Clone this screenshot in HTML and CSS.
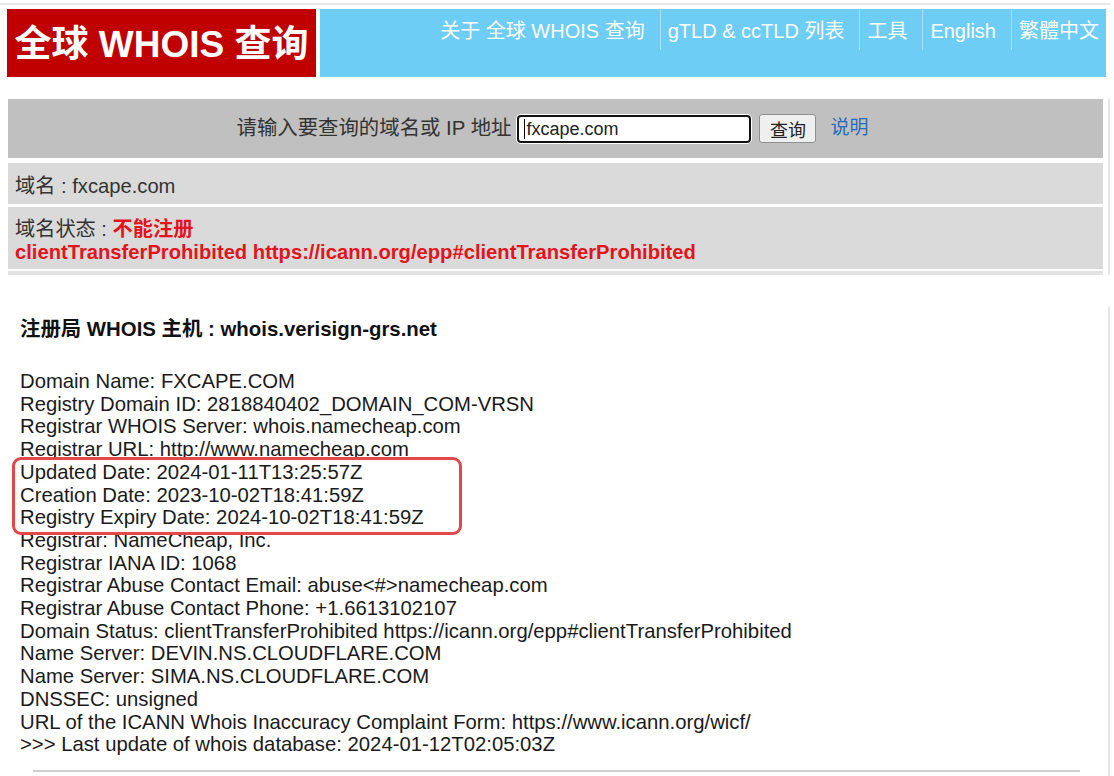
FILE: index.html
```html
<!DOCTYPE html>
<html lang="zh-CN">
<head>
<meta charset="utf-8">
<title>全球 WHOIS 查询</title>
<link rel="stylesheet" href="styles.css">
</head>
<body>
<div class="topline"></div>
<header class="header">
  <div class="logo">全球 WHOIS 查询</div>
  <nav class="nav">
    <ul class="nav-list">
      <li class="nav-item">关于 全球 WHOIS 查询</li>
      <li class="nav-item">gTLD &amp; ccTLD 列表</li>
      <li class="nav-item">工具</li>
      <li class="nav-item">English</li>
      <li class="nav-item">繁體中文</li>
    </ul>
  </nav>
</header>

<section class="result">
  <form class="search-bar">
    <label class="search-label" for="q">请输入要查询的域名或 IP 地址</label>
    <div class="fake-input" id="q"><span class="caret"></span>fxcape.com</div>
    <button type="button" class="search-btn">查询</button>
    <a class="help-link" href="#">说明</a>
  </form>
  <div class="row">域名 : fxcape.com</div>
  <div class="row row-status">
    <div>域名状态 : <span class="red-bold">不能注册</span></div>
    <div class="red-bold">clientTransferProhibited https://icann.org/epp#clientTransferProhibited</div>
  </div>
  <div class="row-strip"></div>
</section>

<section class="whois">
  <div class="whois-title">注册局 WHOIS 主机 : whois.verisign-grs.net</div>
  <div class="whois-body">
    <div class="line">Domain Name: FXCAPE.COM</div>
    <div class="line">Registry Domain ID: 2818840402_DOMAIN_COM-VRSN</div>
    <div class="line">Registrar WHOIS Server: whois.namecheap.com</div>
    <div class="line">Registrar URL: http://www.namecheap.com</div>
    <div class="highlight">
      <div class="line">Updated Date: 2024-01-11T13:25:57Z</div>
      <div class="line">Creation Date: 2023-10-02T18:41:59Z</div>
      <div class="line">Registry Expiry Date: 2024-10-02T18:41:59Z</div>
    </div>
    <div class="line">Registrar: NameCheap, Inc.</div>
    <div class="line">Registrar IANA ID: 1068</div>
    <div class="line">Registrar Abuse Contact Email: abuse&lt;#&gt;namecheap.com</div>
    <div class="line">Registrar Abuse Contact Phone: +1.6613102107</div>
    <div class="line">Domain Status: clientTransferProhibited https://icann.org/epp#clientTransferProhibited</div>
    <div class="line">Name Server: DEVIN.NS.CLOUDFLARE.COM</div>
    <div class="line">Name Server: SIMA.NS.CLOUDFLARE.COM</div>
    <div class="line">DNSSEC: unsigned</div>
    <div class="line">URL of the ICANN Whois Inaccuracy Complaint Form: https://www.icann.org/wicf/</div>
    <div class="line">&gt;&gt;&gt; Last update of whois database: 2024-01-12T02:05:03Z</div>
  </div>
  <hr class="divider">
</section>
</body>
</html>
```
FILE: styles.css
```css
html, body {
  margin: 0;
  padding: 0;
  background: #ffffff;
}

body {
  font-family: "Liberation Sans", Arial, "Noto Sans CJK SC", sans-serif;
  font-size: 20px;
  line-height: 23px;
  color: #222;
  width: 1114px;
  overflow: hidden;
}

.topline {
  height: 2px;
  margin-top: 3px;
  width: 1110px;
  background: #e8e8e8;
}

.header {
  display: flex;
  gap: 4px;
  margin: 4px 0 0 7px;
  width: 1099px;
  height: 68px;
}

.logo {
  width: 309px;
  flex: none;
  box-sizing: border-box;
  padding-top: 3px;
  background: #c00000;
  color: #fff;
  font-weight: bold;
  font-size: 37px;
  line-height: 65px;
  text-align: center;
  white-space: nowrap;
}

.nav {
  flex: 1;
  background: #6dcdf5;
  display: flex;
  justify-content: flex-end;
  align-items: flex-start;
}

.nav-list {
  list-style: none;
  margin: 0;
  padding: 0;
  display: flex;
}

.nav-item {
  color: #fff;
  font-size: 20px;
  line-height: 40px;
  height: 40px;
  padding: 2px 7px 0 7px;
  box-sizing: border-box;
  white-space: nowrap;
}

.nav-item + .nav-item {
  margin-left: 8px;
  border-left: 1px solid #a9e1f9;
  height: 41px;
}

.result {
  margin: 22px 0 0 8px;
  width: 1095px;
  padding-right: 5px;
  border-right: 2px solid #e6e6e6;
}

.search-bar {
  margin: 0;
  height: 59px;
  background: #c0c0c0;
  display: flex;
  align-items: center;
  justify-content: center;
  padding-right: 6px;
}

.search-label {
  color: #333;
  font-size: 20.4px;
  margin-right: 6px;
}

.fake-input {
  width: 234px;
  height: 28px;
  box-sizing: border-box;
  border: 2px solid #111;
  border-radius: 4px;
  background: #fff;
  font-size: 18px;
  line-height: 24px;
  color: #222;
  padding-left: 5px;
  display: flex;
  align-items: center;
  box-shadow: 0 0 0 1px #fff;
}

.caret {
  width: 1px;
  height: 20px;
  background: #000;
  margin-right: 1px;
}

.search-btn {
  margin-left: 8px;
  width: 57px;
  height: 29px;
  background: #efefef;
  border: 1px solid #8f8f8f;
  border-radius: 3px;
  font-family: "Noto Sans CJK SC", sans-serif;
  font-size: 18px;
  line-height: 20px;
  color: #222;
  padding: 0;
}

.help-link {
  margin-left: 14px;
  color: #2a6bb5;
  text-decoration: none;
  font-size: 19px;
  margin-top: -2px;
}

.row {
  margin-top: 5px;
  background: #dadada;
  padding: 12px 7px 6px;
  color: #333;
  font-size: 20.2px;
}

.row-status {
  margin-top: 3px;
  padding: 11px 7px 5px;
}

.red-bold {
  color: #e3141b;
  font-weight: bold;
}

.row-strip {
  margin-top: 2px;
  height: 4px;
  background: #e2e2e2;
}

.whois {
  margin: 32px 0 0 8px;
  width: 1076px;
  padding: 11px 12px 20px;
  border-right: 2px solid #e6e6e6;
}

.whois-title {
  font-weight: bold;
  font-size: 20.4px;
  color: #111;
  margin-bottom: 29px;
}

.whois-body {
  font-size: 20.3px;
  line-height: 22.7px;
  color: #1a1a1a;
}

.line {
  white-space: nowrap;
}

.highlight {
  position: relative;
  width: 450px;
  box-sizing: border-box;
  margin: -4px 0 -6px -8px;
  padding: 1px 5px 3px;
  border: 3px solid #e2474b;
  border-radius: 9px;
  background: #fff;
}

.divider {
  margin: 14px 16px 0 13px;
  border: none;
  height: 2px;
  background: #cfcfcf;
}
```
